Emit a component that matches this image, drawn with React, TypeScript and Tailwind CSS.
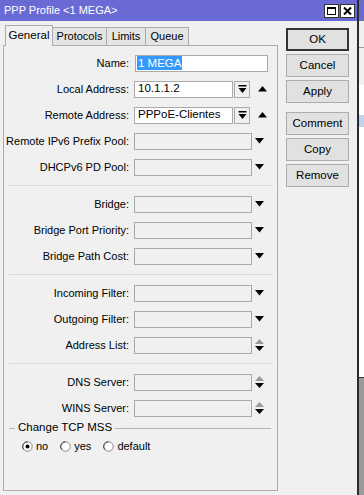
import React from 'react';

const font = { fontFamily: '"Liberation Sans", Arial, sans-serif' };

type Kind = 'name' | 'combo' | 'drop' | 'updown';

interface Field {
    label: string;
    kind: Kind;
    value?: string;
}

const groups: Field[][] = [
    [
        { label: 'Name:', kind: 'name', value: '1 MEGA' },
        { label: 'Local Address:', kind: 'combo', value: '10.1.1.2' },
        { label: 'Remote Address:', kind: 'combo', value: 'PPPoE-Clientes' },
        { label: 'Remote IPv6 Prefix Pool:', kind: 'drop' },
        { label: 'DHCPv6 PD Pool:', kind: 'drop' },
    ],
    [
        { label: 'Bridge:', kind: 'drop' },
        { label: 'Bridge Port Priority:', kind: 'drop' },
        { label: 'Bridge Path Cost:', kind: 'drop' },
    ],
    [
        { label: 'Incoming Filter:', kind: 'drop' },
        { label: 'Outgoing Filter:', kind: 'drop' },
        { label: 'Address List:', kind: 'updown' },
    ],
    [
        { label: 'DNS Server:', kind: 'updown' },
        { label: 'WINS Server:', kind: 'updown' },
    ],
];

function DownArrow() {
    return (
        <svg width="9" height="6" viewBox="0 0 9 6" className="shrink-0">
            <path d="M0 0H9L4.5 5.5Z" fill="#000" />
        </svg>
    );
}

function UpArrow() {
    return (
        <svg width="9" height="6" viewBox="0 0 9 6" className="shrink-0">
            <path d="M0 5.5H9L4.5 0Z" fill="#000" />
        </svg>
    );
}

function UpDown() {
    return (
        <svg width="9" height="12" viewBox="0 0 9 12" className="shrink-0">
            <path d="M0 5H9L4.5 0Z" fill="#9a9a9a" />
            <path d="M0 7H9L4.5 12Z" fill="#000" />
        </svg>
    );
}

function FieldRow({ f }: { f: Field }) {
    return (
        <div className="flex items-center h-[26px]">
            <div className="w-[128px] text-right pr-[3px] text-[11px] text-black whitespace-nowrap">{f.label}</div>
            {f.kind === 'name' && (
                <div className="ml-[3px] w-[133px] h-[17px] bg-white border border-[#a9a9a9] flex items-center pl-[1px]">
                    <span className="bg-[#3399ff] text-white text-[11.5px] leading-[14px] px-[1px]">{f.value}</span>
                </div>
            )}
            {f.kind === 'combo' && (
                <>
                    <div className="ml-[2px] w-[99px] h-[17px] bg-white border border-[#a9a9a9] flex items-center pl-[3px] text-[11.5px]">
                        {f.value}
                    </div>
                    <div className="ml-[1px] w-[16px] h-[17px] bg-[#f0f0f0] border border-[#a9a9a9] flex items-center justify-center">
                        <svg width="9" height="9" viewBox="0 0 9 9">
                            <rect x="0.5" y="0" width="8" height="1.5" fill="#000" />
                            <path d="M0.5 3H8.5L4.5 8Z" fill="#000" />
                        </svg>
                    </div>
                    <div className="ml-[8px] flex items-center">
                        <UpArrow />
                    </div>
                </>
            )}
            {(f.kind === 'drop' || f.kind === 'updown') && (
                <>
                    <div className="ml-[2px] w-[118px] h-[17px] bg-[#f0f0f0] border border-[#a9a9a9]" />
                    <div className="ml-[3px] flex items-center">{f.kind === 'drop' ? <DownArrow /> : <UpDown />}</div>
                </>
            )}
        </div>
    );
}

function Separator() {
    return (
        <div className="h-[11px] flex items-center pl-[5px] pr-[4px]">
            <div className="w-full h-px bg-[#d9d9d9]" />
        </div>
    );
}

function Radio({ label, checked }: { label: string; checked?: boolean }) {
    return (
        <div className="flex items-center gap-[3px]">
            <svg width="11" height="11" viewBox="0 0 11 11">
                <circle cx="5.5" cy="5.5" r="4.7" fill="#fff" stroke="#8a8a8a" strokeWidth="1" />
                <path d="M1.8 8.6A4.7 4.7 0 0 1 5.5 0.8" fill="none" stroke="#404040" strokeWidth="1" />
                {checked && <circle cx="5.5" cy="5.5" r="2" fill="#000" />}
            </svg>
            <span className="text-[11px]">{label}</span>
        </div>
    );
}

function SideButton({ children, primary, className = '' }: { children: React.ReactNode; primary?: boolean; className?: string }) {
    return (
        <div
            className={`w-[63px] h-[23px] flex items-center justify-center text-[11.5px] bg-[#e1e1e1] ${
                primary ? 'border-2 border-[#333333]' : 'border border-[#adadad]'
            } ${className}`}
        >
            {children}
        </div>
    );
}

export default function App() {
    const tabs = ['General', 'Protocols', 'Limits', 'Queue'];
    return (
        <div className="w-[364px] h-[495px] flex overflow-hidden bg-[#a0a0a0]" style={font}>
            {/* dialog */}
            <div className="w-[357px] h-full bg-[#f0f0f0] flex flex-col">
                <div className="h-[21px] bg-[#6a6ad4] flex items-center justify-between pl-[4px] pr-[2px] shrink-0">
                    <span className="text-white text-[11px]">PPP Profile &lt;1 MEGA&gt;</span>
                    <div className="flex gap-[1px]">
                        <div className="w-[15px] h-[14px] bg-white border border-[#333] flex items-center justify-center">
                            <div className="w-[9px] h-[8px] border border-black border-t-2" />
                        </div>
                        <div className="w-[15px] h-[14px] bg-white border border-[#333] flex items-center justify-center">
                            <svg width="9" height="8" viewBox="0 0 9 8">
                                <path d="M1 0.5L8 7.5M8 0.5L1 7.5" stroke="#000" strokeWidth="2" />
                            </svg>
                        </div>
                    </div>
                </div>

                <div className="flex flex-1">
                    {/* left: tabs + panel */}
                    <div className="pl-[3px] pt-[4px] flex flex-col">
                        <div className="flex items-end h-[20px] pl-[2px]">
                            {tabs.map((t, i) => (
                                <div
                                    key={t}
                                    className={
                                        i === 0
                                            ? 'h-[21px] w-[48px] justify-center bg-[#f0f0f0] border border-b-0 border-[#acacac] text-[11.5px] flex items-center relative top-px z-10'
                                            : `h-[18px] justify-center bg-[#e5e5e5] border border-l-0 border-b-0 border-[#acacac] text-[11px] flex items-center ${
                                                  i === 1 ? 'w-[54px]' : i === 2 ? 'w-[39px]' : 'w-[43px]'
                                              }`
                                    }
                                >
                                    {t}
                                </div>
                            ))}
                        </div>
                        <div className="w-[275px] h-[446px] border border-[#acacac] pt-[4px]">
                            {groups.map((g, gi) => (
                                <React.Fragment key={gi}>
                                    {gi > 0 && <Separator />}
                                    {g.map(f => (
                                        <FieldRow key={f.label} f={f} />
                                    ))}
                                </React.Fragment>
                            ))}
                            {/* Change TCP MSS */}
                            <div className="flex items-center pl-[5px] pr-[6px] h-[14px]">
                                <div className="w-[6px] h-px bg-[#b5b5b5]" />
                                <span className="text-[11.5px] px-[3px]">Change TCP MSS</span>
                                <div className="flex-1 h-px bg-[#b5b5b5]" />
                            </div>
                            <div className="flex items-center gap-[12px] pl-[18px] mt-[1px] h-[20px]">
                                <Radio label="no" checked />
                                <Radio label="yes" />
                                <Radio label="default" />
                            </div>
                        </div>
                    </div>

                    {/* right: buttons */}
                    <div className="ml-[8px] pt-[7px] flex flex-col gap-[3px]">
                        <SideButton primary>OK</SideButton>
                        <SideButton>Cancel</SideButton>
                        <SideButton>Apply</SideButton>
                        <SideButton className="mt-[6px]">Comment</SideButton>
                        <SideButton>Copy</SideButton>
                        <SideButton>Remove</SideButton>
                    </div>
                </div>
            </div>
            <div className="w-[2px] h-full bg-[#2b2b2b]" />
            {/* window behind */}
            <div className="flex-1 h-full flex flex-col">
                <div className="h-[21px] bg-[#6a6ad4]" />
                <div className="h-[26px] bg-[#f0f0f0]" />
                <div className="h-[38px] bg-[#f0f0f0] border-t border-[#999]" />
                <div className="h-[30px] bg-white" />
                <div className="h-[12px] bg-[#bcd3ee]" />
                <div className="h-[250px] bg-white" />
                <div className="flex-1 bg-[#9a9a9a] border-t border-[#333]" />
            </div>
        </div>
    );
}
